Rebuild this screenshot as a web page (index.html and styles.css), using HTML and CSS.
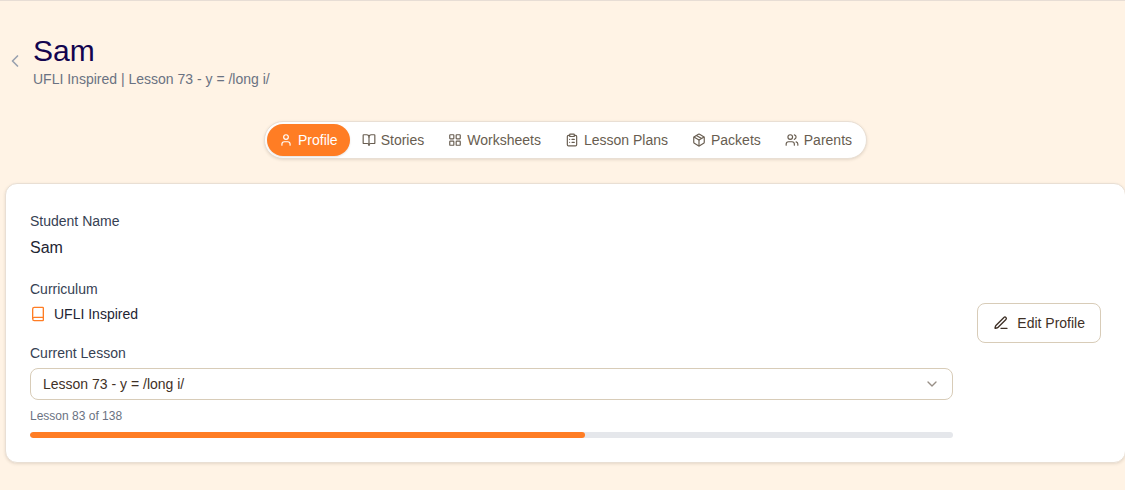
FILE: index.html
```html
<!DOCTYPE html>
<html lang="en">
<head>
  <meta charset="UTF-8" />
  <meta name="viewport" content="width=device-width, initial-scale=1.0" />
  <title>Sam - Student Profile</title>
  <link rel="stylesheet" href="styles.css">
</head>
<body>
  <main class="page">
    <header class="header">
      <a class="back" href="#" aria-label="Back">
        <svg class="icon" width="20" height="20" viewBox="0 0 24 24"><path d="m15 18-6-6 6-6" /></svg>
      </a>
      <div>
        <h1>Sam</h1>
        <p class="subtitle">UFLI Inspired | Lesson 73 - y = /long i/</p>
      </div>
    </header>

    <nav class="tabs">
      <button class="tab active" type="button">
        <svg class="icon" width="14" height="14" viewBox="0 0 24 24"><path d="M19 21v-2a4 4 0 0 0-4-4H9a4 4 0 0 0-4 4v2" /><circle cx="12" cy="7" r="4" /></svg>
        Profile
      </button>
      <button class="tab" type="button">
        <svg class="icon" width="14" height="14" viewBox="0 0 24 24"><path d="M12 7v14" /><path d="M3 18a1 1 0 0 1-1-1V4a1 1 0 0 1 1-1h5a4 4 0 0 1 4 4 4 4 0 0 1 4-4h5a1 1 0 0 1 1 1v13a1 1 0 0 1-1 1h-6a3 3 0 0 0-3 3 3 3 0 0 0-3-3z" /></svg>
        Stories
      </button>
      <button class="tab" type="button">
        <svg class="icon" width="14" height="14" viewBox="0 0 24 24"><rect x="3" y="3" width="7" height="7" rx="1" /><rect x="14" y="3" width="7" height="7" rx="1" /><rect x="14" y="14" width="7" height="7" rx="1" /><rect x="3" y="14" width="7" height="7" rx="1" /></svg>
        Worksheets
      </button>
      <button class="tab" type="button">
        <svg class="icon" width="14" height="14" viewBox="0 0 24 24"><rect x="8" y="2" width="8" height="4" rx="1" /><path d="M16 4h2a2 2 0 0 1 2 2v14a2 2 0 0 1-2 2H6a2 2 0 0 1-2-2V6a2 2 0 0 1 2-2h2" /><path d="M12 11h4M12 16h4M8 11h.01M8 16h.01" /></svg>
        Lesson Plans
      </button>
      <button class="tab" type="button">
        <svg class="icon" width="14" height="14" viewBox="0 0 24 24"><path d="M11 21.73a2 2 0 0 0 2 0l7-4A2 2 0 0 0 21 16V8a2 2 0 0 0-1-1.73l-7-4a2 2 0 0 0-2 0l-7 4A2 2 0 0 0 3 8v8a2 2 0 0 0 1 1.73z" /><path d="M12 22V12" /><path d="M3.3 7 12 12l8.7-5" /><path d="m7.5 4.27 9 5.15" /></svg>
        Packets
      </button>
      <button class="tab" type="button">
        <svg class="icon" width="14" height="14" viewBox="0 0 24 24"><path d="M16 21v-2a4 4 0 0 0-4-4H6a4 4 0 0 0-4 4v2" /><circle cx="9" cy="7" r="4" /><path d="M22 21v-2a4 4 0 0 0-3-3.87" /><path d="M16 3.13a4 4 0 0 1 0 7.75" /></svg>
        Parents
      </button>
    </nav>

    <section class="card">
      <div class="details">
        <div class="field">
          <h2 class="label">Student Name</h2>
          <p class="name">Sam</p>
        </div>

        <div class="field">
          <h2 class="label">Curriculum</h2>
          <p class="curriculum">
            <svg class="icon" width="16" height="16" viewBox="0 0 24 24"><path d="M4 19.5v-15A2.5 2.5 0 0 1 6.5 2H19a1 1 0 0 1 1 1v18a1 1 0 0 1-1 1H6.5a2.5 2.5 0 0 1 0-5H20" /></svg>
            UFLI Inspired
          </p>
        </div>

        <div class="field">
          <label class="label" for="lesson">Current Lesson</label>
          <div class="select-wrap">
            <select id="lesson">
              <option>Lesson 73 - y = /long i/</option>
            </select>
            <svg class="icon chevron" width="16" height="16" viewBox="0 0 24 24"><path d="m6 9 6 6 6-6" /></svg>
          </div>
          <p class="count">Lesson 83 of 138</p>
          <div class="progress" role="progressbar" aria-label="Lesson progress" aria-valuenow="83" aria-valuemin="0" aria-valuemax="138">
            <div class="progress-bar" style="width: 60.14%"></div>
          </div>
        </div>
      </div>

      <button class="edit" type="button">
        <svg class="icon" width="16" height="16" viewBox="0 0 24 24"><path d="M12 20h9" /><path d="M16.376 3.622a1 1 0 0 1 3.002 3.002L7.368 18.635a2 2 0 0 1-.855.506l-2.872.838a.5.5 0 0 1-.62-.62l.838-2.872a2 2 0 0 1 .506-.854z" /></svg>
        Edit Profile
      </button>
    </section>
  </main>
</body>
</html>
```
FILE: styles.css
```css
* {
  box-sizing: border-box;
}
body {
  margin: 0;
  background: #fff3e5;
  color: #1e2533;
  font-family: "Liberation Sans", Arial, sans-serif;
  font-size: 14px;
  line-height: 20px;
  overflow-x: hidden;
}
h1, h2, p {
  margin: 0;
  font-weight: 400;
}
button, select {
  font: inherit;
}
button {
  cursor: pointer;
}
.icon {
  flex: none;
  fill: none;
  stroke: currentColor;
  stroke-width: 2;
  stroke-linecap: round;
  stroke-linejoin: round;
}
.page {
  margin-right: -1px;
  padding: 32px 0 24px 5px;
  border-top: 1px solid #e7ddd5;
}
.header {
  display: flex;
  align-items: center;
  gap: 8px;
}
.back {
  display: flex;
  color: #99a1af;
}
h1 {
  color: #13044f;
  font-size: 30px;
  line-height: 36px;
}
.subtitle {
  color: #6a7282;
}

/* tabs */
.tabs {
  display: flex;
  width: fit-content;
  margin: 32px auto 24px;
  padding: 2px;
  background: #fff;
  border: 1px solid #e9dfd4;
  border-radius: 20px;
  box-shadow: 0 1px 3px rgba(80, 60, 40, 0.15);
}
.tab {
  display: flex;
  align-items: center;
  gap: 5px;
  padding: 6px 12px;
  border: none;
  border-radius: 16px;
  background: none;
  color: #685d50;
}
.tab.active {
  background: #ff7d24;
  color: #fff;
  box-shadow: 0 1px 2px rgba(80, 60, 40, 0.15);
}

/* profile card */
.card {
  display: flex;
  align-items: center;
  gap: 24px;
  padding: 24px;
  background: #fff;
  border: 1px solid #e9dfd4;
  border-radius: 12px;
  box-shadow: 0 1px 3px rgba(80, 60, 40, 0.15);
}
.details {
  display: flex;
  flex: 1;
  flex-direction: column;
  gap: 16px;
}
.label {
  display: block;
  margin-bottom: 2px;
  color: #364153;
  font-size: 14px;
  line-height: 26px;
}
.name {
  font-size: 16px;
  line-height: 24px;
}
.curriculum {
  display: flex;
  align-items: center;
  gap: 8px;
}
.curriculum .icon {
  color: #ff7d24;
}
.select-wrap {
  position: relative;
}
select {
  display: block;
  width: 100%;
  height: 32px;
  padding: 0 36px 0 12px;
  appearance: none;
  background: #fff;
  border: 1px solid #d8ccb8;
  border-radius: 8px;
  color: #3f3127;
}
.chevron {
  position: absolute;
  top: 8px;
  right: 13px;
  color: #988f86;
}
.count {
  margin: 8px 0;
  color: #6a7282;
  font-size: 12px;
  line-height: 16px;
}
.progress {
  height: 6px;
  background: #e5e7eb;
  border-radius: 3px;
  overflow: hidden;
}
.progress-bar {
  height: 100%;
  background: #ff7d24;
  border-radius: 3px;
}
.edit {
  display: flex;
  align-items: center;
  gap: 8px;
  height: 40px;
  padding: 0 15px;
  background: #fff;
  border: 1px solid #d8ccb8;
  border-radius: 8px;
  color: #3f3127;
}
```
